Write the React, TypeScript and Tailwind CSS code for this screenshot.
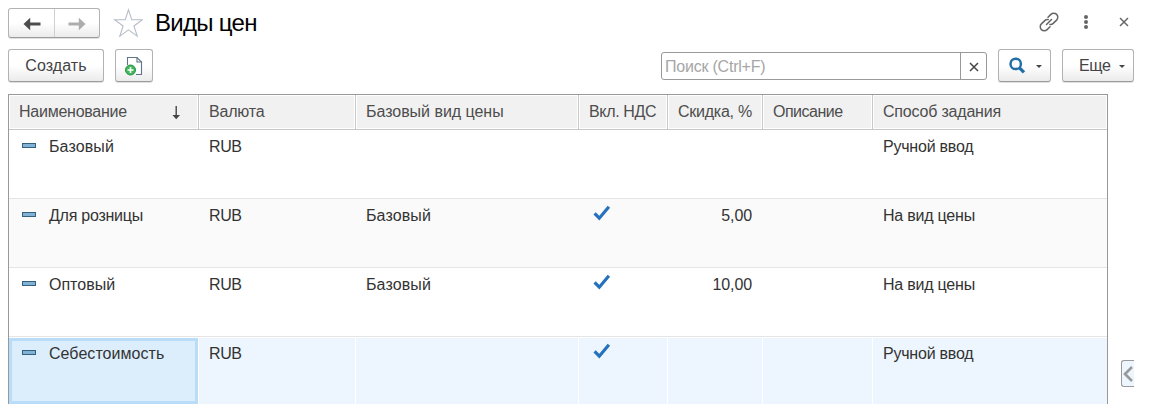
import type { ReactNode } from "react";

type Row = {
  name: string;
  nameTracking?: string;
  currency: string;
  base?: string;
  vat?: boolean;
  discount?: string;
  method: string;
};

const rows: Row[] = [
  { name: "Базовый", nameTracking: "tracking-[0.12px]", currency: "RUB", method: "Ручной ввод" },
  { name: "Для розницы", nameTracking: "tracking-[-0.25px]", currency: "RUB", base: "Базовый", vat: true, discount: "5,00", method: "На вид цены" },
  { name: "Оптовый", currency: "RUB", base: "Базовый", vat: true, discount: "10,00", method: "На вид цены" },
  { name: "Себестоимость", nameTracking: "tracking-[0.05px]", currency: "RUB", vat: true, method: "Ручной ввод" },
];

const headers = [
  { title: "Наименование", tracking: "tracking-[-0.25px]" },
  { title: "Валюта", tracking: "tracking-[-0.2px]" },
  { title: "Базовый вид цены", tracking: "tracking-[-0.03px]" },
  { title: "Вкл. НДС", tracking: "tracking-[-0.35px]" },
  { title: "Скидка, %", tracking: "tracking-[-0.25px]" },
  { title: "Описание", tracking: "tracking-[-0.5px]" },
  { title: "Способ задания", tracking: "tracking-[-0.2px]" },
];

const columns = "grid grid-cols-[190px_157px_223px_89px_95px_110px_234px]";

const buttonLook =
  "rounded-[3px] border border-[#b2b2b2] border-b-[#9c9c9c] bg-linear-to-b from-white from-50% to-[#ebebeb] shadow-[0_1px_0_rgba(0,0,0,0.12)]";

function Button({ className, label, children }: { className: string; label?: string; children: ReactNode }) {
  return (
    <button aria-label={label} className={`flex h-[33px] shrink-0 items-center text-[#444] ${buttonLook} ${className}`}>
      {children}
    </button>
  );
}

function Arrow({ className }: { className?: string }) {
  return (
    <svg viewBox="0 0 18 14" className={`mt-px h-[14px] w-[18px] ${className ?? ""}`} fill="currentColor">
      <path d="M0.5 7 7.2 0.8V5.5H17.5V8.5H7.2V13.2Z" />
    </svg>
  );
}

function Caret() {
  return (
    <svg viewBox="0 0 6 3" className="h-[3px] w-[6px]" fill="#444">
      <path d="M0 0H6L3 3Z" />
    </svg>
  );
}

function Cross({ className }: { className: string }) {
  return (
    <svg viewBox="0 0 10 10" className={className} fill="none" stroke="currentColor" strokeWidth="1.5">
      <path d="M1 1 9 9M9 1 1 9" />
    </svg>
  );
}

function Check() {
  return (
    <svg viewBox="0 0 18 16" className="h-4 w-[18px]" fill="none" stroke="#2472bd" strokeWidth="3.2">
      <path d="M1.6 8.3 6.3 13.2 15.9 1.8" />
    </svg>
  );
}

function ItemMark() {
  return <span className="mt-[13px] mr-[13px] h-[5px] w-[14px] shrink-0 border border-[#34607f] bg-[#82b1d6]" />;
}

function TableRow({ row, index }: { row: Row; index: number }) {
  const selected = index === 3;
  const gap = selected ? "border-r border-r-white" : "";
  const top = selected ? "pt-1" : "pt-[5px]";
  const fill = selected
    ? "border-t border-t-white bg-[#edf6fe]"
    : index === 1
      ? "border-b border-b-[#e5e5e5] bg-[#fafafa]"
      : "border-b border-b-[#e5e5e5] bg-white";
  return (
    <div className={`${columns} h-[69px] shrink-0 text-[#333] ${fill}`}>
      <div className={gap}>
        <div className={`flex ${selected ? "h-[66px] border-[3px] border-[#b9dcf9] bg-[#dceefc] pl-[10px]" : "h-full pl-[13px]"}`}>
          <div className={`flex ${selected ? "-mt-1" : ""}`}>
            <ItemMark />
            <span className={`pt-[5px] whitespace-nowrap ${row.nameTracking ?? ""}`}>{row.name}</span>
          </div>
        </div>
      </div>
      <div className={`pl-[10px] tracking-[-0.4px] ${top} ${gap}`}>{row.currency}</div>
      <div className={`pl-[10px] tracking-[0.12px] ${top} ${gap}`}>{row.base}</div>
      <div className={`pl-[14px] ${selected ? "pt-[5px]" : "pt-[6px]"} ${gap}`}>{row.vat && <Check />}</div>
      <div className={`pr-[11px] text-right tracking-[-0.1px] ${top} ${gap}`}>{row.discount}</div>
      <div className={gap} />
      <div className={`pl-[10px] tracking-[-0.22px] ${top}`}>{row.method}</div>
    </div>
  );
}

export default function App() {
  return (
    <main className="flex h-[404px] w-[1153px] flex-col overflow-hidden bg-white pl-2 font-['Liberation_Sans',Arial,sans-serif] text-[16px] leading-6 text-[#4d4d4d]">
      <header className="flex h-[49px] shrink-0 pt-2">
        <div className={`flex h-[30px] w-[92px] ${buttonLook}`}>
          <button aria-label="Назад" className="flex w-[46px] items-center justify-center border-r border-[#d0d0d0] text-[#4d4d4d]">
            <Arrow />
          </button>
          <button aria-label="Вперед" className="flex flex-1 items-center justify-center text-[#adadad]">
            <Arrow className="rotate-180" />
          </button>
        </div>
        <svg viewBox="0 0 30 30" className="ml-[13px] h-[30px] w-[30px]" fill="none" stroke="#b5bdc6" strokeWidth="1.1">
          <path d="M15.5 1.8 18.8 11.8H29.4L20.9 18 24.2 28.1 15.5 21.9 6.8 28.1 10.1 18 1.6 11.8H12.2Z" />
        </svg>
        <h1 className="ml-[12px] text-[24px] leading-[30px] tracking-[-0.7px] text-black">Виды цен</h1>
        <div className="ml-auto flex h-[28px] items-center pr-[24px] text-[#666]">
          <svg viewBox="0 0 20 20" className="h-5 w-5" fill="none" stroke="currentColor" strokeWidth="1.5" strokeLinecap="round">
            <path d="M9 5.2 11.9 2.4A3.9 3.9 0 0 1 17.6 8.1L14.2 11.4A3.9 3.9 0 0 1 10.8 12.4M11 14.8 8.1 17.6A3.9 3.9 0 0 1 2.4 11.9L5.8 8.6A3.9 3.9 0 0 1 9.2 7.6M7.5 12.5 12.5 7.5" />
          </svg>
          <svg viewBox="0 0 4 14" className="ml-[25px] h-[14px] w-1" fill="currentColor">
            <circle cx="2" cy="2" r="2" />
            <circle cx="2" cy="7" r="2" />
            <circle cx="2" cy="12" r="2" />
          </svg>
          <Cross className="ml-[31px] h-[10px] w-[10px]" />
        </div>
      </header>

      <div className="flex h-[45px] shrink-0 items-start">
        <Button className="w-[96px] justify-center tracking-[0.1px]">Создать</Button>
        <Button label="Создать копированием" className="ml-[11px] w-[38px] pl-[9px]">
          <svg viewBox="0 0 18 20" className="h-5 w-[18px]" fill="none">
            <path d="M2.5 9V1.5H12L16.5 6V18.5H11" fill="#fff" stroke="#5f7486" strokeWidth="1.1" />
            <path d="M12 1.5V6H16.5" stroke="#5f7486" strokeWidth="1.1" />
            <circle cx="5.5" cy="14" r="5" fill="#3fb757" stroke="#289344" />
            <path d="M5.5 11V17M2.5 14H8.5" stroke="#fff" strokeWidth="1.6" />
          </svg>
        </Button>
        <div className="mt-[3px] ml-auto flex h-7 w-[326px] rounded-[3px] border border-[#999] bg-white">
          <input
            placeholder="Поиск (Ctrl+F)"
            className="min-w-0 flex-1 pt-px pl-[3px] tracking-[-0.22px] outline-none placeholder:text-[#a6a6a6]"
          />
          <button aria-label="Очистить" className="flex w-[26px] items-center justify-center border-l border-[#999] text-[#444]">
            <Cross className="mt-px h-[10px] w-[10px]" />
          </button>
        </div>
        <Button label="Поиск" className="ml-[11px] w-[53px] pl-[10px]">
          <svg viewBox="0 0 17 17" className="h-[17px] w-[17px]" fill="none" stroke="#226fa8">
            <circle cx="6.7" cy="6.9" r="5.2" strokeWidth="2.5" />
            <path d="M10.2 10.6 15 15.4" strokeWidth="3.3" />
          </svg>
          <span className="mt-[2px] ml-[10px]">
            <Caret />
          </span>
        </Button>
        <Button className="mr-[19px] ml-[11px] w-[72px] pl-[16px] tracking-[-0.3px]">
          Еще
          <span className="mt-[2px] ml-[8px]">
            <Caret />
          </span>
        </Button>
      </div>

      <div className="flex min-h-0 flex-1">
        <section className="flex w-[1100px] shrink-0 flex-col overflow-hidden border-x border-t border-[#999]">
          <div className={`${columns} h-[35px] shrink-0 border-b border-[#c8c8c8]`}>
            {headers.map(({ title, tracking }, i) => (
              <div key={title} className={`flex ${i < 6 ? "border-r border-[#c8c8c8]" : ""}`}>
                <div className={`m-px flex flex-1 items-start bg-[#f1f1f1] pt-[4px] pl-[9px] whitespace-nowrap ${tracking}`}>
                  {title}
                  {i === 0 && (
                    <svg viewBox="0 0 8 14" className="mt-[6px] mr-[17px] ml-auto h-[14px] w-2" fill="#444">
                      <path d="M3.5 0H4.9V9H8L4.2 13.3 0.4 9H3.5Z" />
                    </svg>
                  )}
                </div>
              </div>
            ))}
          </div>
          {rows.map((row, i) => (
            <TableRow key={row.name} row={row} index={i} />
          ))}
        </section>
        <button aria-label="Показать панель" className="mt-[266px] ml-[13px] flex h-[27px] w-[13px] items-center rounded-l-[3px] border border-r-0 border-[#999] bg-[#edf6fe]">
          <svg viewBox="0 0 12 18" className="h-[18px] w-3" fill="none" stroke="#999" strokeWidth="2.6">
            <path d="M10 2 3 9 10 16" />
          </svg>
        </button>
      </div>
    </main>
  );
}
